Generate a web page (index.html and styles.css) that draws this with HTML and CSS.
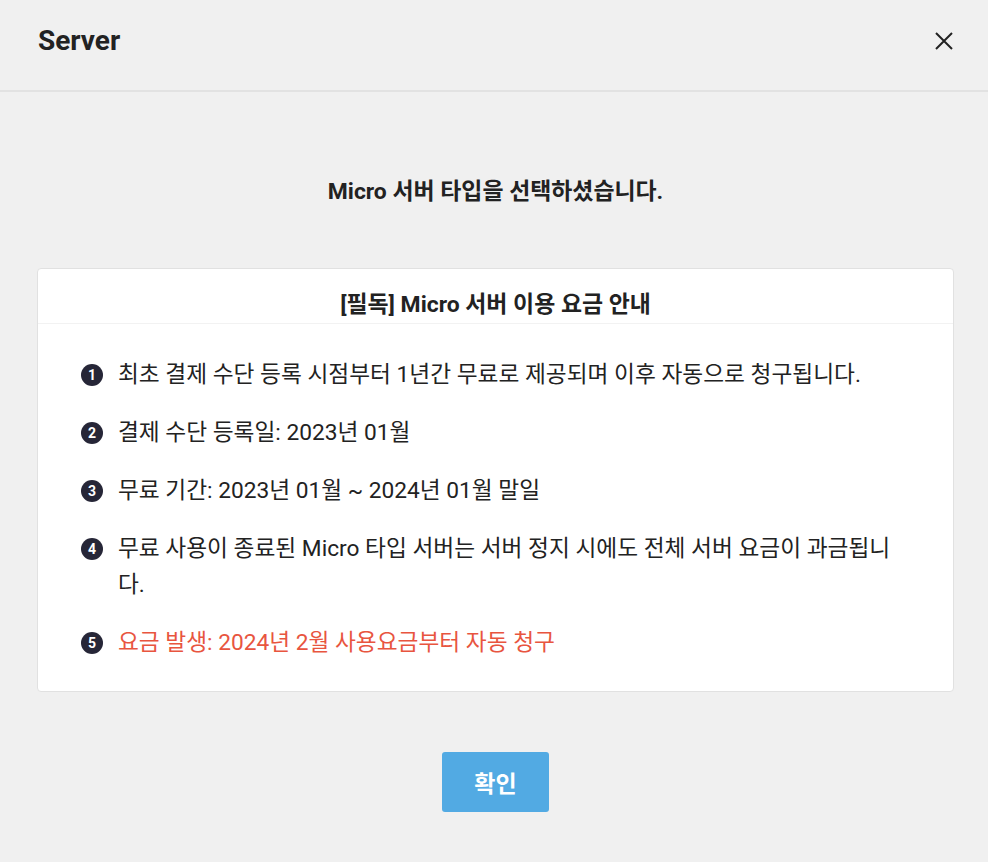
FILE: index.html
```html
<!DOCTYPE html>
<html lang="ko">
<head>
<meta charset="utf-8">
<title>Server</title>
<link rel="stylesheet" href="styles.css">
</head>
<body>
<div class="modal">
  <header class="modal-header">
    <h1 class="modal-title">Server</h1>
    <button class="close-btn" aria-label="닫기">
      <svg width="20" height="20" viewBox="0 0 20 20"><path d="M2 2 L18 18 M18 2 L2 18" stroke="#222" stroke-width="2" fill="none"/></svg>
    </button>
  </header>
  <main class="modal-body">
    <p class="lead">Micro 서버 타입을 선택하셨습니다.</p>
    <section class="notice">
      <h2 class="notice-title">[필독] Micro 서버 이용 요금 안내</h2>
      <ol class="notice-list">
        <li><span class="num">1</span><span class="txt">최초 결제 수단 등록 시점부터 1년간 무료로 제공되며 이후 자동으로 청구됩니다.</span></li>
        <li><span class="num">2</span><span class="txt">결제 수단 등록일: 2023년 01월</span></li>
        <li><span class="num">3</span><span class="txt">무료 기간: 2023년 01월 ~ 2024년 01월 말일</span></li>
        <li><span class="num">4</span><span class="txt">무료 사용이 종료된 Micro 타입 서버는 서버 정지 시에도 전체 서버 요금이 과금됩니<br>다.</span></li>
        <li class="alert"><span class="num">5</span><span class="txt">요금 발생: 2024년 2월 사용요금부터 자동 청구</span></li>
      </ol>
    </section>
    <div class="actions">
      <button class="confirm-btn">확인</button>
    </div>
  </main>
</div>
</body>
</html>
```
FILE: styles.css
```css
* { box-sizing: border-box; }
html, body {
  margin: 0;
  padding: 0;
  background: #f0f0f0;
  font-family: Roboto, "Noto Sans CJK KR", sans-serif;
  color: #222;
}
.modal {
  width: 988px;
  min-height: 862px;
  background: #f0f0f0;
}
.modal-header {
  height: 92px;
  display: flex;
  align-items: center;
  justify-content: space-between;
  padding: 0 34px 8px 38px;
  border-bottom: 2px solid #e2e2e2;
}
.modal-title {
  margin: 0;
  font-size: 28px;
  font-weight: 700;
  color: #222;
  line-height: 1;
}
.close-btn {
  background: none;
  border: 0;
  padding: 0;
  width: 20px;
  height: 20px;
  display: flex;
  cursor: pointer;
}
.modal-body {
  padding: 85px 34px 0 37px;
  display: flex;
  flex-direction: column;
  align-items: stretch;
}
.lead {
  margin: 0;
  text-align: center;
  font-size: 22.9px;
  font-weight: 700;
  line-height: 30px;
  color: #222;
}
.notice {
  margin-top: 61px;
  background: #fff;
  border: 1px solid #e1e1e1;
  border-radius: 4px;
}
.notice-title {
  margin: 0;
  height: 55px;
  padding-top: 21px;
  text-align: center;
  font-size: 22.9px;
  font-weight: 700;
  line-height: 30px;
  color: #222;
  border-bottom: 1px solid #f2f2f2;
}
.notice-list {
  list-style: none;
  margin: 0;
  padding: 33px 30px 30px 43px;
}
.notice-list li {
  display: flex;
  align-items: flex-start;
  font-size: 22.7px;
  line-height: 36px;
  color: #222;
}
.notice-list li + li { margin-top: 22px; }
.num {
  flex: none;
  width: 22px;
  height: 22px;
  margin-top: 7px;
  margin-right: 15px;
  border-radius: 50%;
  background: #262637;
  color: #fff;
  font-size: 14px;
  font-weight: 700;
  line-height: 22px;
  text-align: center;
}
.notice-list li.alert { color: #e8553f; }
.actions {
  display: flex;
  justify-content: center;
  margin-top: 60px;
}
.confirm-btn {
  width: 107px;
  height: 60px;
  border: 0;
  border-radius: 3px;
  background: #52aae3;
  color: #fff;
  font-family: Roboto, "Noto Sans CJK KR", sans-serif;
  font-size: 23px;
  font-weight: 700;
  cursor: pointer;
}
```
